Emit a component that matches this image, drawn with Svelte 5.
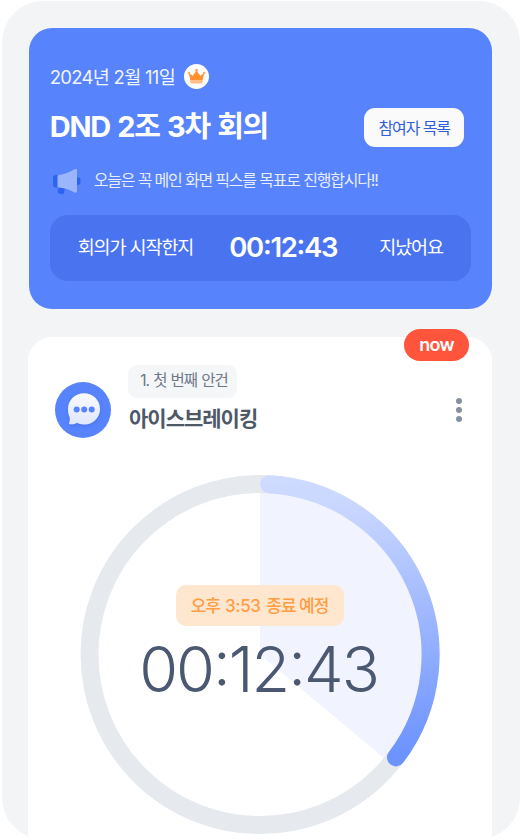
<script>
  const elapsed = '00:12:43';
</script>

<main class="frame">
  <section class="meeting">
    <div class="date-row">
      <span class="date">2024년 2월 11일</span>
      <span class="crown">
        <svg width="19" height="17" viewBox="0 0 19 17">
          <path d="M1.800 5 5.700 7.700 9.500 2.600l3.800 5.100L17.200 5l-1.600 7.400H3.400z" fill="#ff9130" />
          <path d="M3.400 11.900h12.200v2.700a1 1 0 0 1-1 1H4.400a1 1 0 0 1-1-1z" fill="#ffbe85" />
          <circle cx="9.500" cy="2.300" r="1.500" fill="#ffab61" />
          <circle cx="1.900" cy="5" r="1.300" fill="#ffab61" />
          <circle cx="17.100" cy="5" r="1.300" fill="#ffab61" />
        </svg>
      </span>
    </div>
    <div class="title-row">
      <h1>DND 2조 3차 회의</h1>
      <button class="members">참여자 목록</button>
    </div>
    <div class="notice">
      <svg class="horn" width="29" height="28" viewBox="0 0 29 28">
        <rect x="1" y="8" width="8" height="12.500" rx="3" fill="#2c63f3" />
        <path d="M22 10.500h4a2.300 2.300 0 0 1 2.500 2.300v2.600a2.300 2.300 0 0 1-2.500 2.300H22z" fill="#2c63f3" />
        <path d="M6.800 20h6.500l-1.400 6a1.800 1.800 0 0 1-2.200 1.300l-2.800-.8a1.700 1.700 0 0 1-1.200-2z" fill="#2c63f3" />
        <path d="M5.500 9.200q0-1 1-1.300Q15 6.800 22.600 2.200 25 1 25 3.300V24.300Q25 26.500 22.600 25.400 15 21.300 6.500 20.500 5.500 20.300 5.500 19.300z" fill="#9bb5ff" />
      </svg>
      <span>오늘은 꼭 메인 화면 픽스를 목표로 진행합시다!!</span>
    </div>
    <div class="elapsed">
      <span class="before">회의가 시작한지</span>
      <strong>{elapsed}</strong>
      <span class="after">지났어요</span>
    </div>
  </section>

  <section class="agenda">
    <span class="now">now</span>
    <header>
      <svg class="chat" width="56" height="56" viewBox="0 0 56 56">
        <defs>
          <linearGradient id="bubble" x1="0" y1="0" x2="0" y2="1">
            <stop offset="0" stop-color="#fafbff" />
            <stop offset="1" stop-color="#dfe7ff" />
          </linearGradient>
          <filter id="soft" x="-30%" y="-30%" width="160%" height="160%">
            <feDropShadow dx="0" dy="1.500" stdDeviation="1.500" flood-color="#2c59d8" flood-opacity=".35" />
          </filter>
        </defs>
        <circle cx="28" cy="28" r="28" fill="#5783fc" />
        <path filter="url(#soft)" d="M29 11.200c9 0 16 7 16 15.700s-7 15.600-16 15.600c-2.700 0-5-.6-7.100-1.700-2 1.300-4.500 1.700-7 1.400-.8-.1-1.100-.7-.7-1.400.7-1.500.8-3.600.5-5.500C13.500 32.900 13 30.200 13 26.900c0-8.700 7-15.700 16-15.700z" fill="url(#bubble)" />
        <g fill="#5783fc">
          <circle cx="21.700" cy="27.400" r="3" />
          <circle cx="29.200" cy="27.400" r="3" />
          <circle cx="36.700" cy="27.400" r="3" />
        </g>
      </svg>
      <div class="heading">
        <span class="chip">1. 첫 번째 안건</span>
        <h2>아이스브레이킹</h2>
      </div>
      <div class="more"><i></i><i></i><i></i></div>
    </header>

    <div class="dial">
      <svg width="360" height="360" viewBox="0 0 360 360">
        <defs>
          <linearGradient id="arc" gradientUnits="userSpaceOnUse" x1="210" y1="0" x2="250" y2="290">
            <stop offset="0" stop-color="#cfdbff" />
            <stop offset=".15" stop-color="#c8d6ff" />
            <stop offset="1" stop-color="#6c93fe" />
          </linearGradient>
        </defs>
        <path d="M180 179.500V9.500A170 170 0 0 1 310.400 288.500z" fill="#f1f3ff" />
        <circle cx="180" cy="179.500" r="170.500" fill="none" stroke="#e6eaef" stroke-width="18" />
        <path d="M189 9.200A170.500 170.500 0 0 1 316 282.400" fill="none" stroke="url(#arc)" stroke-width="18" stroke-linecap="round" />
      </svg>
      <div class="readout">
        <span class="end">오후 <b>3:53</b> 종료 예정</span>
        <span class="time">{elapsed}</span>
      </div>
    </div>
  </section>
</main>

<style>
  :global(body) {
    margin: 0;
    background: #fff;
  }
  .frame {
    box-sizing: border-box;
    width: 518px;
    height: 838px;
    margin: 1px 0 0 1.700px;
    padding: 26.500px 27.500px 0 27px;
    border-radius: 41px;
    background: #f2f4f6;
    overflow: hidden;
    font-family: Inter, 'Noto Sans CJK KR', sans-serif;
    font-feature-settings: 'calt' 1;
    white-space: nowrap;
  }
  h1, h2 {
    margin: 0;
  }
  .meeting {
    box-sizing: border-box;
    width: 463px;
    height: 281.500px;
    padding: 35px 21px 0;
    border-radius: 23px;
    background: #5783fc;
    color: #fff;
  }
  .date-row {
    display: flex;
    align-items: center;
    height: 27px;
    gap: 9px;
  }
  .date {
    font-size: 18.500px;
    line-height: 24px;
    letter-spacing: -0.700px;
    color: #f0f4ff;
    padding-top: 2px;
  }
  .crown {
    display: grid;
    place-items: center;
    width: 25px;
    height: 25px;
    border-radius: 50%;
    background: #fff;
  }
  .title-row {
    display: flex;
    align-items: center;
    justify-content: space-between;
    height: 39px;
    margin-top: 18px;
    padding-right: 6.500px;
  }
  h1 {
    font-size: 29px;
    line-height: 38px;
    font-weight: 700;
    letter-spacing: -1.200px;
    word-spacing: 1.500px;
  }
  .members {
    width: 100px;
    height: 39px;
    padding: 0;
    border: 0;
    border-radius: 11px;
    background: #fafafa;
    color: #2f5fdc;
    font: 400 16px/40px Inter, 'Noto Sans CJK KR', sans-serif;
    letter-spacing: -1.100px;
  }
  .notice {
    display: flex;
    align-items: center;
    height: 28px;
    margin-top: 20px;
    padding-left: 2px;
    gap: 13px;
    font-size: 16px;
    line-height: 24px;
    letter-spacing: -1.180px;
    color: #e8eeff;
  }
  .notice span {
    margin-top: -1px;
  }
  .elapsed {
    box-sizing: border-box;
    display: flex;
    align-items: center;
    height: 66.500px;
    margin-top: 20px;
    padding: 0 27px 0 28px;
    border-radius: 18px;
    background: #4a74ef;
    font-size: 18.500px;
    line-height: 28px;
    letter-spacing: -1.100px;
  }
  .elapsed span {
    margin-top: -2px;
  }
  .elapsed strong {
    width: 110px;
    margin: -1px 40px 0 36px;
    font-size: 27.500px;
    font-weight: 600;
    letter-spacing: -1.300px;
  }
  .agenda {
    position: relative;
    box-sizing: border-box;
    width: 464px;
    height: 520px;
    margin: 28px 0 0 -0.700px;
    padding-top: 28px;
    border-radius: 24px;
    background: #fff;
  }
  .now {
    position: absolute;
    top: -8.500px;
    right: 23px;
    width: 65px;
    height: 32px;
    border-radius: 16px;
    background: #ff553d;
    color: #fff;
    font-size: 18px;
    font-weight: 600;
    line-height: 31px;
    letter-spacing: -0.700px;
    text-align: center;
  }
  header {
    display: flex;
    height: 72px;
    padding: 0 30.500px 0 27px;
  }
  .chat {
    margin-top: 17px;
  }
  .heading {
    flex: 1;
    margin-left: 17px;
  }
  .chip {
    display: block;
    width: 109px;
    height: 32.500px;
    border-radius: 9px;
    background: #f5f6f8;
    color: #6d7889;
    font-size: 15.500px;
    line-height: 31px;
    letter-spacing: -1px;
    word-spacing: 0.800px;
    text-indent: 3px;
    text-align: center;
  }
  h2 {
    margin: 6.500px 0 0 1px;
    color: #4e5968;
    font-size: 21px;
    font-weight: 600;
    line-height: 30px;
    letter-spacing: -1px;
  }
  .more {
    display: flex;
    flex-direction: column;
    gap: 3.400px;
    margin-top: 32.500px;
  }
  .more i {
    width: 6px;
    height: 6px;
    border-radius: 50%;
    background: #8590a0;
  }
  .dial {
    display: grid;
    width: 360px;
    height: 360px;
    margin: 38px 0 0 52px;
  }
  .dial > * {
    grid-area: 1 / 1;
  }
  .readout {
    display: flex;
    flex-direction: column;
    align-items: center;
    padding-top: 109.500px;
  }
  .end {
    width: 168px;
    height: 41.500px;
    border-radius: 10px;
    background: #ffe6cf;
    color: #ff9d42;
    font-size: 17px;
    font-weight: 500;
    line-height: 42px;
    letter-spacing: -1px;
    text-indent: -1px;
    text-align: center;
  }
  .end b {
    margin: 0 2px 0 1.500px;
    font-weight: 500;
    letter-spacing: -0.300px;
  }
  .time {
    margin: 3px 3px 0 0;
    color: #4a5872;
    font-size: 63px;
    font-weight: 300;
    line-height: 80px;
    letter-spacing: -2px;
  }
</style>
